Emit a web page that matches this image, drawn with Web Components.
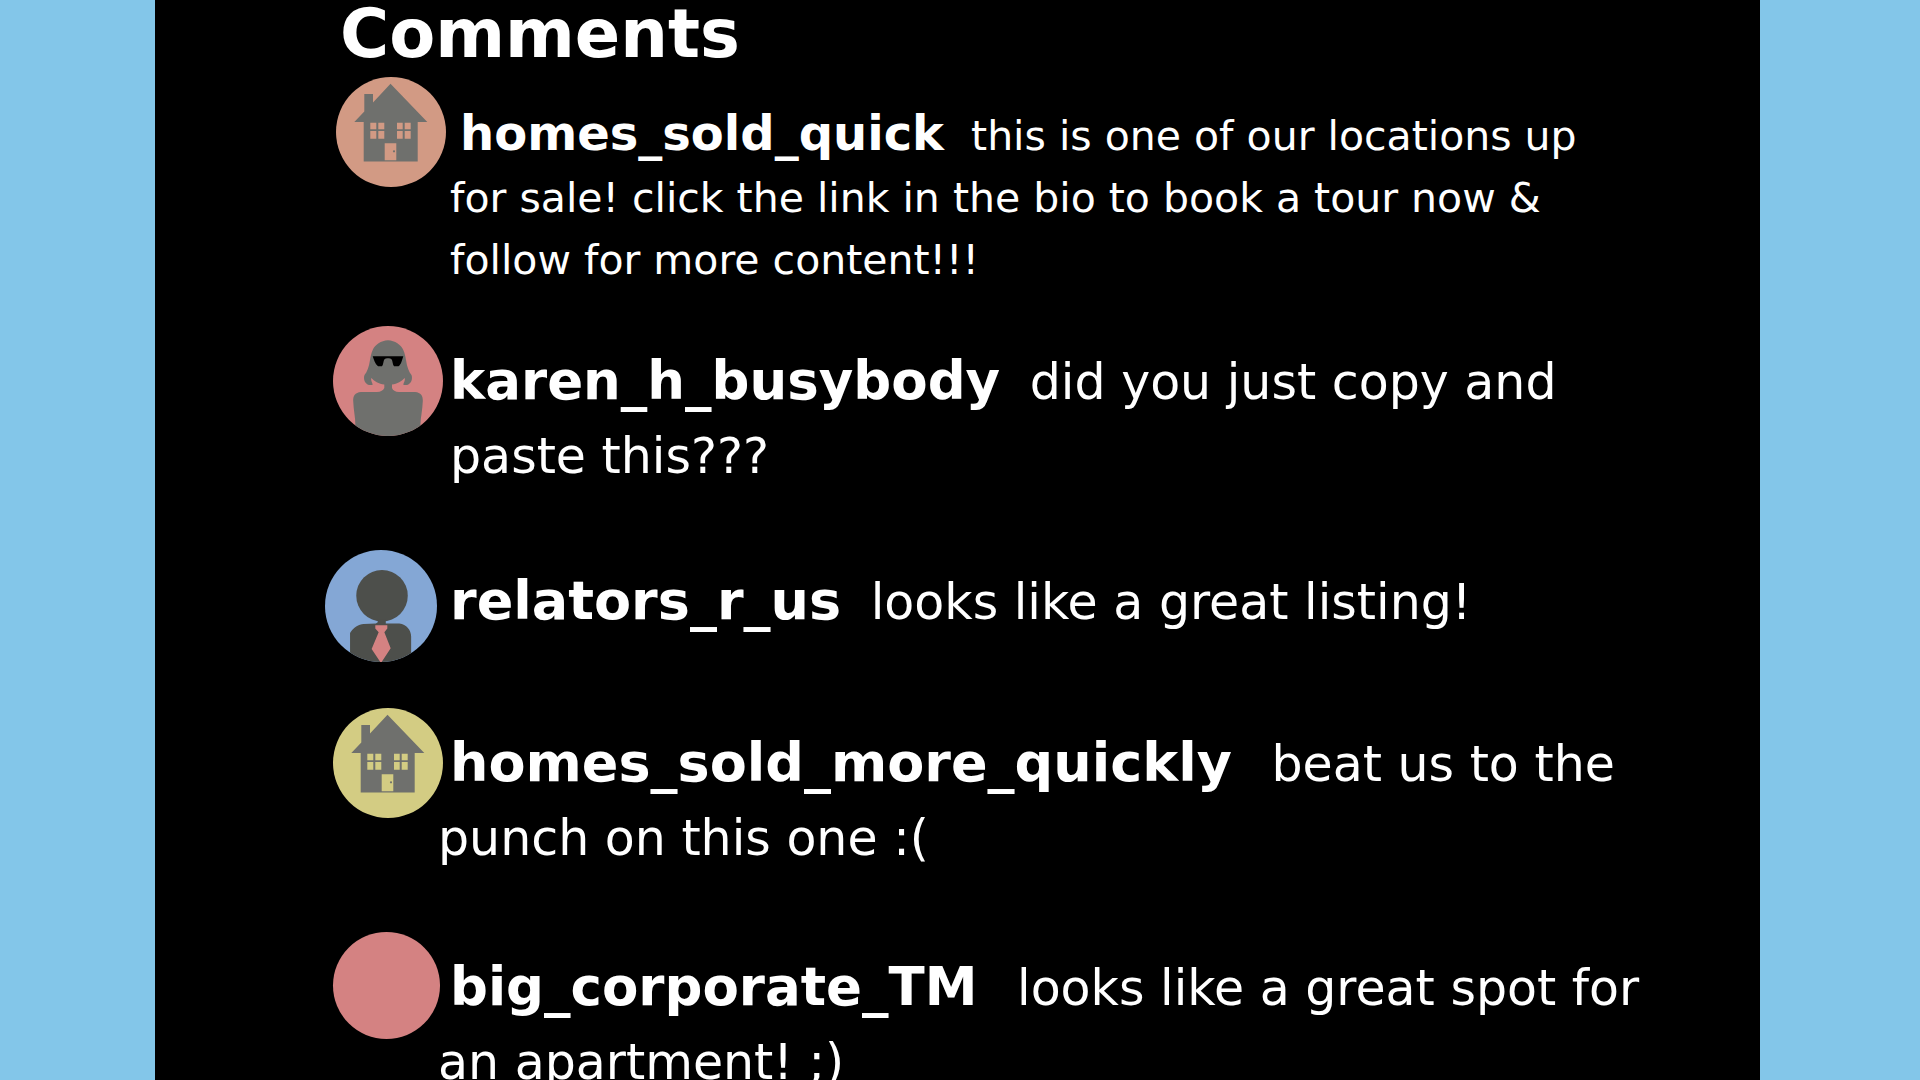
<!DOCTYPE html>
<html lang="en">
<head>
<meta charset="utf-8">
<title>Comments</title>
<style>
  body { margin: 0; background: #83c6e9; font-family: "DejaVu Sans", sans-serif; color: #fff; }
</style>
</head>
<body>
<comments-panel>
  <span slot="title">Comments</span>
  <user-comment variant="small">
    <user-avatar slot="avatar" kind="house" color="#d29a84"></user-avatar>
    <span slot="name">homes_sold_quick</span>this is one of our locations up<br>for sale! click the link in the bio to book a tour now &amp; follow for more content!!!
  </user-comment>
  <user-comment>
    <user-avatar slot="avatar" kind="woman" color="#d48282"></user-avatar>
    <span slot="name">karen_h_busybody</span>did you just copy and paste this???
  </user-comment>
  <user-comment variant="short wide">
    <user-avatar slot="avatar" kind="man" color="#84a7d5"></user-avatar>
    <span slot="name">relators_r_us</span>looks like a great listing!
  </user-comment>
  <user-comment variant="hanging wide">
    <user-avatar slot="avatar" kind="house" color="#d3cc83"></user-avatar>
    <span slot="name">homes_sold_more_quickly</span>beat us to the punch on this one :(
  </user-comment>
  <user-comment variant="hanging">
    <user-avatar slot="avatar" kind="plain" color="#d48282"></user-avatar>
    <span slot="name">big_corporate_TM</span>looks like a great spot for an apartment! ;)
  </user-comment>
</comments-panel>

<script>
  class CommentsPanel extends HTMLElement {
    constructor() {
      super();
      this.attachShadow({ mode: "open" }).innerHTML = `
        <style>
          :host { display: block; box-sizing: border-box; height: 100vh; overflow: hidden; padding: 0 160px 0 155px; }
          section { box-sizing: border-box; min-height: 100%; background: #000; padding: 0 96px 0 170px; }
          h1 { margin: 0 0 9px; padding-left: 15px; font-size: 67px; line-height: 68px; font-weight: bold; }
        </style>
        <section>
          <h1><slot name="title"></slot></h1>
          <slot></slot>
        </section>`;
    }
  }

  class UserComment extends HTMLElement {
    constructor() {
      super();
      this.attachShadow({ mode: "open" }).innerHTML = `
        <style>
          :host { display: block; margin-bottom: 56px; --inset: 8px; --drop: 20px; --size: 49px; --line: 74px;
                  --name: 53px; --gap: 14px; --pad: 12px; --indent: 0; }
          :host([variant~="small"]) { margin-bottom: 35px; --inset: 11px; --drop: 28px; --size: 41px; --line: 62px;
                  --name: 48px; --indent: 10px; }
          :host([variant~="short"]) { margin-bottom: 46px; --inset: 0; --drop: 16px; --avatar: 112px; }
          :host([variant~="hanging"]) { --gap: 24px; --pad: 0; --indent: 12px; }
          :host([variant~="wide"]) { --name: 54px; }
          article { display: flex; align-items: flex-start; }
          .avatar { flex: none; box-sizing: border-box; width: 113px; padding-left: var(--inset); }
          p { flex: 1; margin: 0; padding: var(--drop) 0 0 var(--pad); text-indent: var(--indent);
              font-size: var(--size); line-height: var(--line); }
          strong { font-size: var(--name); line-height: 0; margin-right: var(--gap); }
        </style>
        <article>
          <div class="avatar"><slot name="avatar"></slot></div>
          <p><strong><slot name="name"></slot></strong><slot></slot></p>
        </article>`;
    }
  }

  const figures = {
    plain: () => "",
    house: (color) => `
      <path fill="#6f706d" d="M54.5 6.7 91.3 45H81.7V84.5H27.7V45H18.3L28.3 34.6V17H37V25.5Z"/>
      <path fill="${color}" d="M34.3 45.7h6v6.6h-6zM42.3 45.7h6v6.6h-6zM34.3 54h6v7.7h-6zM42.3 54h6v7.7h-6z
        M61 45.7h5.7v6.6H61zM68.7 45.7h6v6.6h-6zM61 54h5.7v7.7H61zM68.7 54h6v7.7h-6zM48.7 66.3h11.6v17H48.7z"/>
      <circle cx="58" cy="74.3" r="1.1" fill="#6f706d"/>`,
    woman: () => `
      <path fill="#6f706d" d="M55 14.3C48 14.5 42 19 39.7 24C38 28 37.5 31 37 34C36 41 34 46 31.5 49
        C30 53 32 58 36 59L39.5 59C40 57 37.5 55 38.3 52C41 55 46 58 51.3 58.4V62C50 64.5 48 65.8 44 66H28
        C22 66.5 20 70 20.2 75C20.5 84 22.5 92 22.3 98V110H87.5V98C87.5 92 89.5 84 89.8 75C90 70 88 66.5 82 66H66
        C62 65.8 60 64.5 59 62V58.4C64 58 69 55 71.7 52C72.5 55 70 57 70.5 59L74 59C78 58 80 53 78.5 49
        C76 46 74 41 73 34C72.5 31 72 28 70.3 24C68 19 62 14.5 55 14.3Z"/>
      <path d="M39.7 30.2H70.3C69 34 68.5 38 65.5 40.3H61C59.5 38.5 59.8 35 58.5 33.3C57 32 53 32 51.5 33.3
        C50.2 35 50.5 38.5 49 40.3H45C42 38 41 34 39.7 30.2Z"/>`,
    man: () => `
      <circle cx="56" cy="44.9" r="25.3" fill="#4d4f4b"/>
      <path fill="#4d4f4b" d="M51.8 68H59.7V72.3H73C80 73 84.6 79 84.6 85V110H24.6V81.5C28 76.5 33 73 38 72.8L50 72.3L51.8 71Z"/>
      <path fill="#d48282" d="M49.4 74H61.2V77L58.3 80.8L64.5 96.6L55 111L45.8 97.3L52.7 80.8L49.4 77Z"/>`
  };

  class UserAvatar extends HTMLElement {
    connectedCallback() {
      if (this.shadowRoot) return;
      const color = this.getAttribute("color");
      this.attachShadow({ mode: "open" }).innerHTML = `
        <style>
          :host { display: block; width: var(--avatar, 110px); height: var(--avatar, 110px);
                  border-radius: 50%; overflow: hidden; background: ${color}; }
          :host([kind="plain"]) { --avatar: 107px; margin: 0 auto; }
          svg { display: block; width: 100%; height: 100%; }
        </style>
        <svg viewBox="0 0 110 110" aria-hidden="true">${figures[this.getAttribute("kind")](color)}</svg>`;
    }
  }

  customElements.define("comments-panel", CommentsPanel);
  customElements.define("user-comment", UserComment);
  customElements.define("user-avatar", UserAvatar);
</script>
</body>
</html>
